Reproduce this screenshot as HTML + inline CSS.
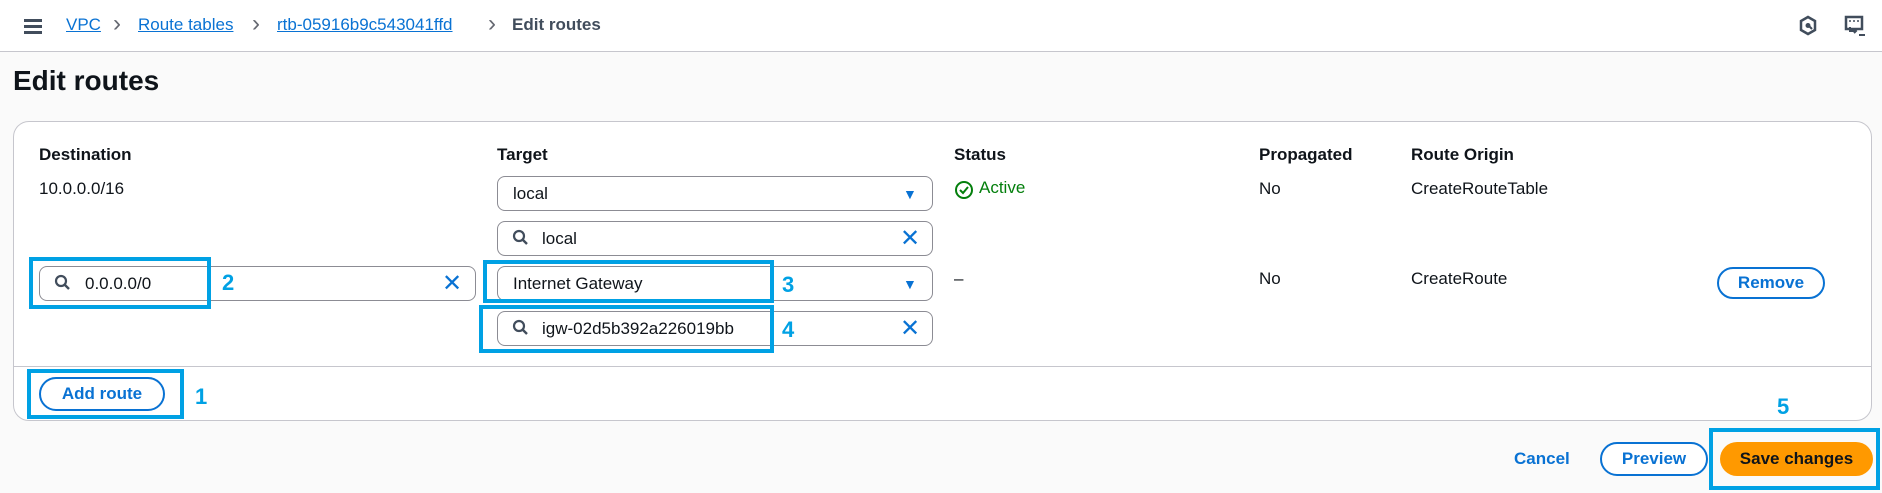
<!DOCTYPE html>
<html><head><meta charset="utf-8"><style>
*{box-sizing:border-box;margin:0;padding:0}
body{width:1882px;height:493px;background:#fafafa;font-family:"Liberation Sans",sans-serif;font-size:17px;color:#0f141a;position:relative;overflow:hidden}
.a{position:absolute}
.top{left:0;top:0;width:1882px;height:52px;background:#fff;border-bottom:1px solid #c6c6cd}
.bc{top:15px;font-size:17px;color:#0972d3;text-decoration:underline}
.sep{top:10px;font-size:24px;color:#656871}
.panel{left:13px;top:121px;width:1859px;height:300px;background:#fff;border:1px solid #c6c6cd;border-radius:16px}
.h{font-weight:bold;font-size:17px;top:145px}
.box{border:1px solid #8c8c94;border-radius:8px;background:#fff;height:35px}
.t{font-size:17px}
.blue{border:4px solid #00a1e4}
.n{color:#00a1e4;font-weight:bold;font-size:22px}
.btn{border:2px solid #0972d3;border-radius:20px;color:#0972d3;font-weight:bold;font-size:17px;text-align:center;background:#fff}
.x{color:#0972d3;font-size:24px;line-height:24px}
</style></head><body>
<div class="a top"></div>
<div class="a" style="left:24px;top:19px;width:18px;height:3px;background:#414d5c;box-shadow:0 6px 0 #414d5c,0 12px 0 #414d5c"></div>
<div class="a bc" style="left:66px">VPC</div>
<div class="a sep" style="left:113px">›</div>
<div class="a bc" style="left:138px">Route tables</div>
<div class="a sep" style="left:252px">›</div>
<div class="a bc" style="left:277px">rtb-05916b9c543041ffd</div>
<div class="a sep" style="left:488px">›</div>
<div class="a" style="left:512px;top:15px;font-size:17px;color:#414d5c;font-weight:bold">Edit routes</div>
<svg class="a" style="left:1798px;top:15px" width="20" height="22" viewBox="0 0 20 22"><path d="M10 2 L17 6 V15 L10 19 L3 15 V6 Z" fill="none" stroke="#414d5c" stroke-width="2.5"/><circle cx="10" cy="10.5" r="2.5" fill="#414d5c"/><path d="M11 11 L14 14" stroke="#414d5c" stroke-width="2"/></svg>
<svg class="a" style="left:1844px;top:15px" width="22" height="22" viewBox="0 0 22 22"><rect x="2" y="2" width="16" height="12" fill="none" stroke="#414d5c" stroke-width="2.5"/><path d="M5 6h2M9 6h2M13 6h2" stroke="#414d5c" stroke-width="1.5"/><path d="M6 12v4h6M10 14l2 2-2 2" fill="none" stroke="#414d5c" stroke-width="2"/><path d="M15 20h6" stroke="#414d5c" stroke-width="2"/></svg>
<div class="a" style="left:13px;top:65px;font-size:28px;font-weight:bold">Edit routes</div>
<div class="a panel"></div>
<div class="a" style="left:14px;top:366px;width:1857px;height:1px;background:#c6c6cd"></div>
<div class="a h" style="left:39px">Destination</div>
<div class="a h" style="left:497px">Target</div>
<div class="a h" style="left:954px">Status</div>
<div class="a h" style="left:1259px">Propagated</div>
<div class="a h" style="left:1411px">Route Origin</div>
<div class="a t" style="left:39px;top:179px">10.0.0.0/16</div>
<div class="a box" style="left:497px;top:176px;width:436px"></div>
<div class="a t" style="left:513px;top:184px">local</div>
<div class="a" style="left:903px;top:186px;color:#0972d3;font-size:14px">▼</div>
<div class="a box" style="left:497px;top:221px;width:436px"></div>
<svg class="a" style="left:512px;top:229px" width="18" height="18"><circle cx="7" cy="7" r="5" fill="none" stroke="#414d5c" stroke-width="2.2"/><path d="M11 11l4 4" stroke="#414d5c" stroke-width="2.4"/></svg>
<div class="a t" style="left:542px;top:229px">local</div>
<div class="a x" style="left:900px;top:227px">✕</div>
<svg class="a" style="left:954px;top:180px" width="20" height="20"><circle cx="10" cy="10" r="8" fill="none" stroke="#037f0c" stroke-width="2"/><path d="M6 10l3 3 5-6" fill="none" stroke="#037f0c" stroke-width="2"/></svg>
<div class="a t" style="left:979px;top:178px;color:#037f0c">Active</div>
<div class="a t" style="left:1259px;top:179px">No</div>
<div class="a t" style="left:1411px;top:179px">CreateRouteTable</div>
<div class="a box" style="left:39px;top:266px;width:437px"></div>
<svg class="a" style="left:54px;top:274px" width="18" height="18"><circle cx="7" cy="7" r="5" fill="none" stroke="#414d5c" stroke-width="2.2"/><path d="M11 11l4 4" stroke="#414d5c" stroke-width="2.4"/></svg>
<div class="a t" style="left:85px;top:274px">0.0.0.0/0</div>
<div class="a x" style="left:442px;top:272px">✕</div>
<div class="a box" style="left:497px;top:266px;width:436px"></div>
<div class="a t" style="left:513px;top:274px">Internet Gateway</div>
<div class="a" style="left:903px;top:276px;color:#0972d3;font-size:14px">▼</div>
<div class="a box" style="left:497px;top:311px;width:436px"></div>
<svg class="a" style="left:512px;top:319px" width="18" height="18"><circle cx="7" cy="7" r="5" fill="none" stroke="#414d5c" stroke-width="2.2"/><path d="M11 11l4 4" stroke="#414d5c" stroke-width="2.4"/></svg>
<div class="a t" style="left:542px;top:319px">igw-02d5b392a226019bb</div>
<div class="a x" style="left:900px;top:317px">✕</div>
<div class="a t" style="left:954px;top:269px">–</div>
<div class="a t" style="left:1259px;top:269px">No</div>
<div class="a t" style="left:1411px;top:269px">CreateRoute</div>
<div class="a btn" style="left:1717px;top:267px;width:108px;height:32px;line-height:28px">Remove</div>
<div class="a btn" style="left:39px;top:377px;width:126px;height:34px;line-height:30px">Add route</div>
<div class="a blue" style="left:29px;top:257px;width:182px;height:52px"></div>
<div class="a n" style="left:222px;top:270px">2</div>
<div class="a blue" style="left:483px;top:260px;width:291px;height:43px"></div>
<div class="a n" style="left:782px;top:272px">3</div>
<div class="a blue" style="left:479px;top:305px;width:295px;height:48px"></div>
<div class="a n" style="left:782px;top:317px">4</div>
<div class="a blue" style="left:27px;top:369px;width:157px;height:50px"></div>
<div class="a n" style="left:195px;top:384px">1</div>
<div class="a n" style="left:1777px;top:394px">5</div>
<div class="a" style="left:1514px;top:449px;color:#0972d3;font-weight:bold;font-size:17px">Cancel</div>
<div class="a btn" style="left:1600px;top:442px;width:108px;height:34px;line-height:30px">Preview</div>
<div class="a" style="left:1720px;top:442px;width:153px;height:34px;border-radius:20px;background:#ff9900;color:#0f141a;font-weight:bold;font-size:17px;text-align:center;line-height:34px">Save changes</div>
<div class="a blue" style="left:1709px;top:428px;width:171px;height:62px"></div>
</body></html>
